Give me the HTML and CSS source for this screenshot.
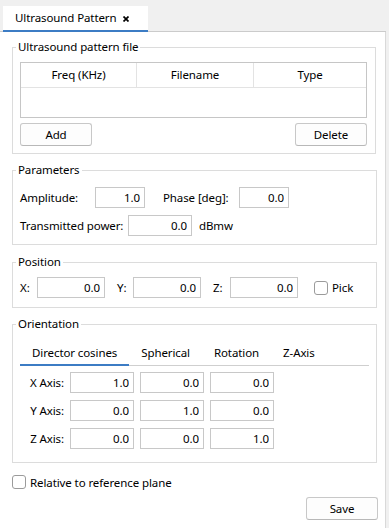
FILE: index.html
```html
<!DOCTYPE html>
<html>
<head>
<title>Ultrasound Pattern</title>
<link rel="stylesheet" href="styles.css">
</head>
<body>

<div id="window">
    <div class="tab-header">
        <div class="doc-tab">
            <span>Ultrasound Pattern</span>
            <svg class="close" width="6" height="6" viewBox="0 0 6 6">
                <path d="M0.5 0.5 L5.5 5.5 M5.5 0.5 L0.5 5.5" stroke="#000" stroke-width="1.7"/>
            </svg>
        </div>
    </div>

    <div class="pane">
        <fieldset class="group first">
            <legend>Ultrasound pattern file</legend>
            <div class="table">
                <div class="thead">
                    <div class="th">Freq (KHz)</div>
                    <div class="th">Filename</div>
                    <div class="th">Type</div>
                </div>
                <div class="tbody"></div>
            </div>
            <div class="button-row">
                <button class="btn">Add</button>
                <button class="btn">Delete</button>
            </div>
        </fieldset>

        <fieldset class="group params">
            <legend>Parameters</legend>
            <div class="row">
                <label class="lbl amp">Amplitude:</label>
                <input class="num w50" type="text" value="1.0">
                <label class="lbl phase">Phase [deg]:</label>
                <input class="num w50" type="text" value="0.0">
            </div>
            <div class="row">
                <label class="lbl power">Transmitted power:</label>
                <input class="num w64" type="text" value="0.0">
                <span class="unit">dBmw</span>
            </div>
        </fieldset>

        <fieldset class="group position">
            <legend>Position</legend>
            <div class="row">
                <label class="lbl axis">X:</label>
                <input class="num w68" type="text" value="0.0">
                <label class="lbl axis spaced">Y:</label>
                <input class="num w68" type="text" value="0.0">
                <label class="lbl axis spaced">Z:</label>
                <input class="num w68" type="text" value="0.0">
                <span class="check pick-box"></span>
                <span class="check-text">Pick</span>
            </div>
        </fieldset>

        <fieldset class="group orientation">
            <legend>Orientation</legend>
            <div class="subtabs">
                <div class="subtab active">Director cosines</div>
                <div class="subtab">Spherical</div>
                <div class="subtab">Rotation</div>
                <div class="subtab">Z-Axis</div>
            </div>
            <div class="matrix">
                <label class="mlbl">X Axis:</label>
                <input class="num" type="text" value="1.0">
                <input class="num" type="text" value="0.0">
                <input class="num" type="text" value="0.0">

                <label class="mlbl">Y Axis:</label>
                <input class="num" type="text" value="0.0">
                <input class="num" type="text" value="1.0">
                <input class="num" type="text" value="0.0">

                <label class="mlbl">Z Axis:</label>
                <input class="num" type="text" value="0.0">
                <input class="num" type="text" value="0.0">
                <input class="num" type="text" value="1.0">
            </div>
        </fieldset>

        <div class="relative-row">
            <span class="check"></span>
            <span class="check-text">Relative to reference plane</span>
        </div>

        <div class="save-row">
            <button class="btn save">Save</button>
        </div>
    </div>
</div>

</body>
</html>
```

FILE: styles.css
```css
body {
    margin: 0;
    background: #f0f0f0;
    font-family: "Segoe UI", "Noto Sans", sans-serif;
    font-size: 11.5px;
    letter-spacing: -0.1px;
    color: #000;
    white-space: nowrap;
}
#window {
    width: 386px;
}
.tab-header {
    height: 31px;
    display: flex;
    align-items: flex-end;
    border-bottom: 1px solid #cbcbcb;
}
.doc-tab {
    margin-left: 3px;
    margin-bottom: -1px;
    padding: 0 19px 0 12px;
    box-sizing: border-box;
    width: 145px;
    height: 26px;
    background: #fff;
    border-bottom: 2px solid #3c7cc4;
    display: flex;
    align-items: center;
    line-height: 16px;
}
.doc-tab .close {
    margin-left: auto;
    margin-top: 1px;
}
.pane {
    background: #fff;
    border-right: 1px solid #d9d9d9;
    height: 496px;
    padding: 7px 8px 0 12px;
    box-sizing: border-box;
}
.group {
    margin: 8px 0 0 0;
    border: 1px solid #dcdcdc;
    padding: 7px 8px 7px 7px;
    min-width: 0;
}
.group.first {
    margin-top: 0;
    margin-right: 1px;
}
.group legend {
    padding: 0 2px;
    margin-left: -4px;
    line-height: 16px;
}
.table {
    border: 1px solid #c6c6c6;
}
.thead {
    display: grid;
    grid-template-columns: 115px 117px 1fr;
    height: 24px;
    border-bottom: 1px solid #e3e3e3;
}
.th {
    text-align: center;
    line-height: 24px;
    border-left: 1px solid #e3e3e3;
}
.th:first-child {
    border-left: none;
}
.tbody {
    height: 29px;
}
.button-row {
    display: flex;
    justify-content: space-between;
    margin-top: 5px;
}
.btn {
    width: 72px;
    height: 23px;
    padding: 0;
    background: #fdfdfd;
    border: 1px solid #c8c8c8;
    border-bottom-color: #b8b8b8;
    border-radius: 3px;
    font-family: inherit;
    font-size: 11.5px;
    letter-spacing: -0.1px;
    color: #000;
}
.params {
    padding-top: 9px;
    padding-bottom: 8px;
}
.position {
    margin-top: 9px;
    padding-bottom: 9px;
}
.row {
    display: flex;
    align-items: center;
    height: 21px;
}
.row + .row {
    margin-top: 7px;
}
.lbl {
    flex: none;
}
.amp { width: 75px; }
.phase { width: 76px; margin-left: 18px; }
.power { width: 108px; }
.axis { width: 17px; }
.axis.spaced { width: 16px; margin-left: 12px; }
.axis.spaced + .num + .axis.spaced { width: 17px; }
.unit { margin-left: 7px; }
.num {
    height: 21px;
    box-sizing: border-box;
    border: 1px solid #c8c8c8;
    padding: 0 4px 0 2px;
    text-align: right;
    font-family: inherit;
    font-size: 11.5px;
    letter-spacing: -0.1px;
    color: #000;
    background: #fff;
    outline: none;
    min-width: 0;
}
.w50 { width: 50px; }
.w64 { width: 64px; }
.w68 { width: 68px; }
.check {
    width: 14px;
    height: 14px;
    box-sizing: border-box;
    border: 1px solid #9b9b9b;
    border-radius: 3px;
    background: #fff;
    flex: none;
}
.pick-box {
    margin-left: 16px;
}
.check-text {
    margin-left: 4px;
}
.orientation {
    padding-bottom: 13px;
}
.subtabs {
    display: flex;
    height: 26px;
    border-bottom: 1px solid #cfcfcf;
    margin-right: -1px;
}
.subtab {
    padding: 6px 12px 3px 12px;
    line-height: 16px;
    margin-bottom: -1px;
    border-bottom: 2px solid transparent;
}
.subtab.active {
    border-bottom-color: #3c7cc4;
}
.matrix {
    display: grid;
    grid-template-columns: 44px 64px 64px 64px;
    column-gap: 6px;
    row-gap: 7px;
    margin-top: 6px;
}
.matrix .num {
    width: 64px;
}
.mlbl {
    text-align: right;
    line-height: 21px;
}
.relative-row {
    display: flex;
    align-items: center;
    margin-top: 12px;
    height: 14px;
}
.save-row {
    display: flex;
    justify-content: flex-end;
    margin-top: 8px;
    margin-right: -1px;
}
```
